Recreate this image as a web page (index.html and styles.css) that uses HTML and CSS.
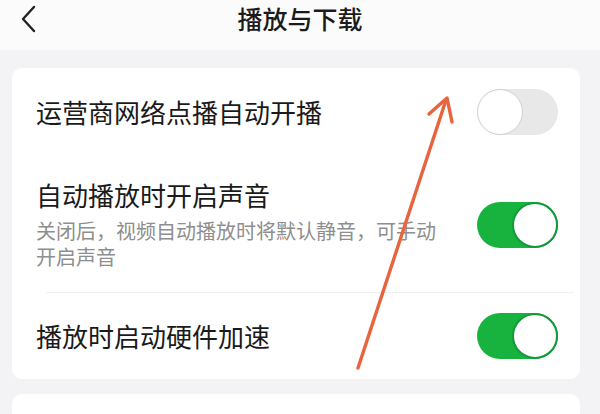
FILE: index.html
```html
<!DOCTYPE html>
<html lang="zh-CN">
<head>
<meta charset="utf-8">
<title>播放与下载</title>
<link rel="stylesheet" href="styles.css">
</head>
<body>
<div class="page">
  <header class="header">
    <div class="back">
      <svg width="18" height="28" viewBox="0 0 18 28"><polyline points="15,2 4,14 15,26" fill="none" stroke="#222" stroke-width="2.4" stroke-linecap="round" stroke-linejoin="round"/></svg>
    </div>
    <div class="title">播放与下载</div>
    <div></div>
  </header>
  <section class="card">
    <div class="row row-first">
      <div class="text"><div class="label">运营商网络点播自动开播</div></div>
      <div class="toggle off"><span class="knob"></span></div>
    </div>
    <div class="row row-second">
      <div class="text">
        <div class="label">自动播放时开启声音</div>
        <div class="desc">关闭后，视频自动播放时将默认静音，可手动开启声音</div>
      </div>
      <div class="toggle on"><span class="knob"></span></div>
    </div>
    <div class="row row-third">
      <div class="text"><div class="label">播放时启动硬件加速</div></div>
      <div class="toggle on"><span class="knob"></span></div>
    </div>
  </section>
  <section class="card card-next"></section>
  <svg class="annot" width="600" height="414" viewBox="0 0 600 414">
    <line x1="358" y1="368" x2="446" y2="100" stroke="#e8643e" stroke-width="3.4" stroke-linecap="round"/>
    <polyline points="429,114 447,98 452,122" fill="none" stroke="#e8643e" stroke-width="3.4" stroke-linecap="round" stroke-linejoin="round"/>
  </svg>
</div>
</body>
</html>
```
FILE: styles.css
```css
html, body {
  margin: 0;
  padding: 0;
}
body {
  background: #f3f3f5;
  font-family: "Noto Sans CJK SC", "Noto Sans", sans-serif;
  color: #1a1a1a;
  width: 600px;
  height: 414px;
  overflow: hidden;
}
.page {
  position: relative;
  width: 600px;
  height: 414px;
}
.header {
  height: 50px;
  background: #fbfbfc;
  display: grid;
  grid-template-columns: 1fr auto 1fr;
  align-items: start;
}
.back {
  padding: 5px 0 0 19px;
  height: 28px;
}
.back svg {
  display: block;
}
.title {
  font-size: 25px;
  line-height: 37px;
  font-weight: 500;
  color: #1b1b1b;
}
.card {
  background: #ffffff;
  border-radius: 10px;
  margin: 18px 20px 0 12px;
}
.row {
  display: flex;
  align-items: center;
  justify-content: space-between;
  padding: 0 22px 0 24px;
}
.row-first {
  height: 88px;
}
.row-second {
  padding-top: 23px;
  padding-bottom: 22px;
}
.row-third {
  height: 87px;
  position: relative;
}
.row-third::before {
  content: "";
  position: absolute;
  left: 34px;
  right: 6px;
  top: 0;
  height: 1px;
  background: #f0f0f2;
}
.text {
  max-width: 410px;
}
.label {
  font-size: 26px;
  line-height: 32px;
  color: #1a1a1a;
}
.desc {
  margin-top: 7px;
  font-size: 20px;
  line-height: 26px;
  color: #8e8e8e;
}
.toggle {
  width: 81px;
  height: 46px;
  border-radius: 23px;
  position: relative;
  flex: none;
  box-sizing: border-box;
}
.toggle .knob {
  position: absolute;
  top: 0;
  width: 46px;
  height: 46px;
  border-radius: 50%;
  background: #ffffff;
  box-sizing: border-box;
}
.toggle.off {
  background: #e8e8e8;
}
.toggle.off .knob {
  left: 0;
  border: 1.5px solid #d0d0d0;
}
.toggle.on {
  background: #17b33e;
}
.toggle.on .knob {
  right: 0;
  border: 2px solid #14993a;
}
.card-next {
  margin-top: 15px;
  height: 40px;
  border-radius: 10px 10px 0 0;
}
.annot {
  position: absolute;
  left: 0;
  top: 0;
  pointer-events: none;
}
```
